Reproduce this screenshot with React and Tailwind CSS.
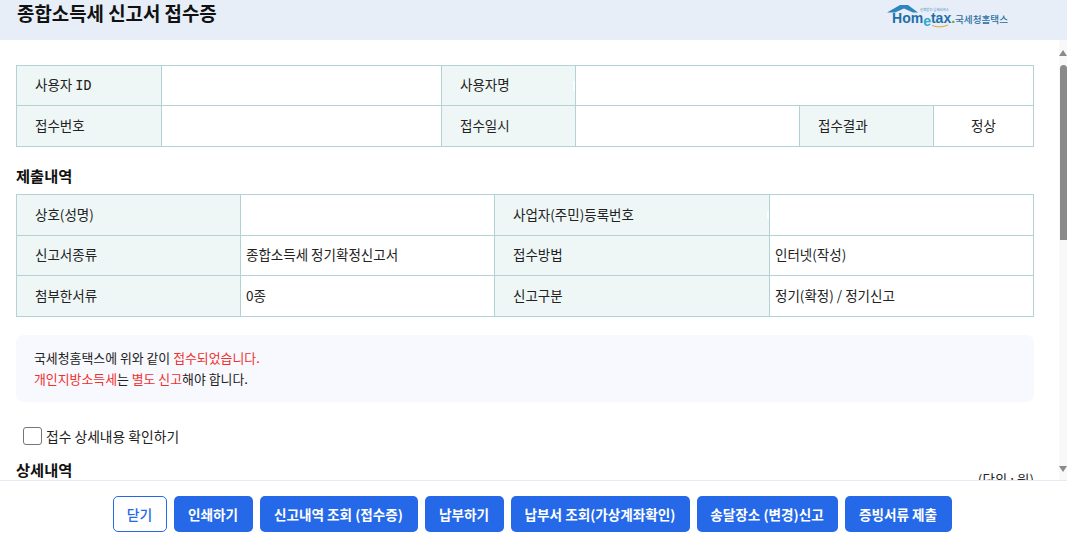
import React from 'react';

const labelCell = 'relative border border-[#b2d2d6] bg-[#eef7f6] pl-[18px] pb-[2px] text-[13.5px] font-normal text-left';
const valueCell = 'border border-[#b2d2d6] pl-[5px] pb-[2px] text-[13.5px] text-left font-normal';
const notch = 'absolute right-0 w-[2px] rounded-l-full bg-white';

const HometaxLogo = () => (
  <div className="flex items-start mr-[59px]">
    <div className="relative w-[69px] h-[30px]">
      <svg width="69" height="30" viewBox="0 0 69 30" className="absolute left-0 top-0">
        <path d="M1 12.5 L14 5 L22 5 L32 12.5 L27 12.5 L18 8.5 L9 12.5 Z" fill="#2f86bd" />
        <path d="M46 25.5 Q54 28.5 62 25" stroke="#e8a33c" strokeWidth="1" fill="none" />
      </svg>
      <span className="absolute left-[34px] top-[8px] text-[3.4px] leading-[4px] whitespace-nowrap text-[#3a8cc0]">신뢰받는 납세서비스</span>
      <span className="absolute left-[6px] top-[11px] text-[14px] leading-[15px] font-bold text-[#1e6fa8] font-['Liberation_Sans',sans-serif] whitespace-nowrap">
        Hom<span className="text-[#2aa7d0] relative top-[3px]">e</span>tax<span className="text-[#5aa83c]">.</span>
      </span>
    </div>
    <span className="text-[9.6px] leading-[14px] mt-[12px] text-[#2d6f9f] font-medium whitespace-nowrap">국세청홈택스</span>
  </div>
);

const Scrollbar = () => (
  <div className="w-[8px] shrink-0 bg-[#f8f8f8] flex flex-col items-center pt-[10px] pb-[8px]">
    <div className="w-0 h-0 border-x-[4px] border-x-transparent border-b-[6px] border-b-[#8a8a8a]" />
    <div className="w-[7px] h-[175px] mt-[9px] ml-[1px] rounded-t-[4px] bg-[#8a8a8a]" />
    <div className="mt-auto w-0 h-0 border-x-[4px] border-x-transparent border-t-[6px] border-t-[#8a8a8a]" />
  </div>
);

const buttons = [
  { label: '인쇄하기', width: 'w-[79px]' },
  { label: '신고내역 조회 (접수증)', width: 'w-[158px]' },
  { label: '납부하기', width: 'w-[79px]' },
  { label: '납부서 조회(가상계좌확인)', width: 'w-[179px]' },
  { label: '송달장소 (변경)신고', width: 'w-[141px]' },
  { label: '증빙서류 제출', width: 'w-[107px]' },
];

export default function App() {
  return (
    <div className="w-[1067px] h-[542px] overflow-hidden flex flex-col bg-white text-[#222] text-[14px] font-['Noto_Sans_CJK_KR','Noto_Sans',sans-serif]">
      <header className="h-[40px] shrink-0 bg-[#e7eef8] flex justify-between items-start">
        <h1 className="pl-[17px] text-[18.9px] leading-[25px] font-semibold text-[#111]">종합소득세 신고서 접수증</h1>
        <HometaxLogo />
      </header>

      <div className="flex-1 min-h-0 flex">
        <main className="flex-1 min-w-0 overflow-hidden pl-[16px] pr-[25px] pt-[25px]">
          <table className="w-[1017px] border-collapse table-fixed">
            <colgroup>
              <col className="w-[145px]" />
              <col className="w-[280px]" />
              <col className="w-[134px]" />
              <col className="w-[224px]" />
              <col className="w-[134px]" />
              <col className="w-[100px]" />
            </colgroup>
            <tbody>
              <tr className="h-[40px]">
                <th className={labelCell}>사용자 <span className="font-['DejaVu_Sans_Mono',monospace]">ID</span></th>
                <td className={valueCell}></td>
                <th className={labelCell}>
                  사용자명
                  <span className={`${notch} top-[15px] h-[10px]`} />
                </th>
                <td className={valueCell} colSpan={3}></td>
              </tr>
              <tr className="h-[41px]">
                <th className={labelCell}>접수번호</th>
                <td className={valueCell}></td>
                <th className={labelCell}>접수일시</th>
                <td className={valueCell}></td>
                <th className={labelCell}>접수결과</th>
                <td className="border border-[#b2d2d6] pb-[2px] text-[13.5px] text-center">정상</td>
              </tr>
            </tbody>
          </table>

          <h2 className="mt-[17px] mb-[8px] text-[15.3px] leading-[22px] font-semibold text-[#111]">제출내역</h2>

          <table className="w-[1017px] border-collapse table-fixed">
            <colgroup>
              <col className="w-[224px]" />
              <col className="w-[254px]" />
              <col className="w-[275px]" />
              <col className="w-[264px]" />
            </colgroup>
            <tbody>
              <tr className="h-[41px]">
                <th className={labelCell}>상호(성명)</th>
                <td className={valueCell}></td>
                <th className={labelCell}>
                  사업자(주민)등록번호
                  <span className={`${notch} top-[16px] h-[8px]`} />
                </th>
                <td className={valueCell}></td>
              </tr>
              <tr className="h-[40px]">
                <th className={labelCell}>신고서종류</th>
                <td className={valueCell}>종합소득세 정기확정신고서</td>
                <th className={labelCell}>접수방법</th>
                <td className={valueCell}>인터넷(작성)</td>
              </tr>
              <tr className="h-[41px]">
                <th className={labelCell}>첨부한서류</th>
                <td className={valueCell}>0종</td>
                <th className={labelCell}>신고구분</th>
                <td className={valueCell}>정기(확정) / 정기신고</td>
              </tr>
            </tbody>
          </table>

          <div className="mt-[18px] h-[67px] rounded-[8px] bg-[#f8f9fe] pl-[18px] pt-[12px] text-[12.9px] leading-[21px]">
            <p>국세청홈택스에 위와 같이 <span className="text-[#f0302c]">접수되었습니다.</span></p>
            <p><span className="text-[#f0302c]">개인지방소득세</span>는 <span className="text-[#f0302c]">별도 신고</span>해야 합니다.</p>
          </div>

          <label className="mt-[25px] ml-[7px] flex items-center gap-[4px] text-[13.8px] leading-[18px]">
            <span className="w-[19px] h-[18px] rounded-[3px] border border-[#767676] bg-white" />
            접수 상세내용 확인하기
          </label>

          <div className="mt-[13px] flex justify-between">
            <h2 className="text-[15.3px] leading-[22px] font-semibold text-[#111]">상세내역</h2>
            <span className="text-[13.5px] leading-[18px] mt-[12px]">(단위 : 원)</span>
          </div>
        </main>
        <Scrollbar />
      </div>

      <footer className="h-[62px] shrink-0 border-t border-[#e5ebf3] bg-white flex justify-center gap-[7px] pt-[15px] pr-[3px]">
        <button className="w-[54px] h-[36px] rounded-[5px] border border-[#2569e8] bg-white text-[13.8px] font-medium text-[#2569e8]">닫기</button>
        {buttons.map((b) => (
          <button key={b.label} className={`${b.width} h-[36px] rounded-[5px] bg-[#2569e8] text-white text-[13.6px] font-semibold`}>
            {b.label}
          </button>
        ))}
      </footer>
    </div>
  );
}
